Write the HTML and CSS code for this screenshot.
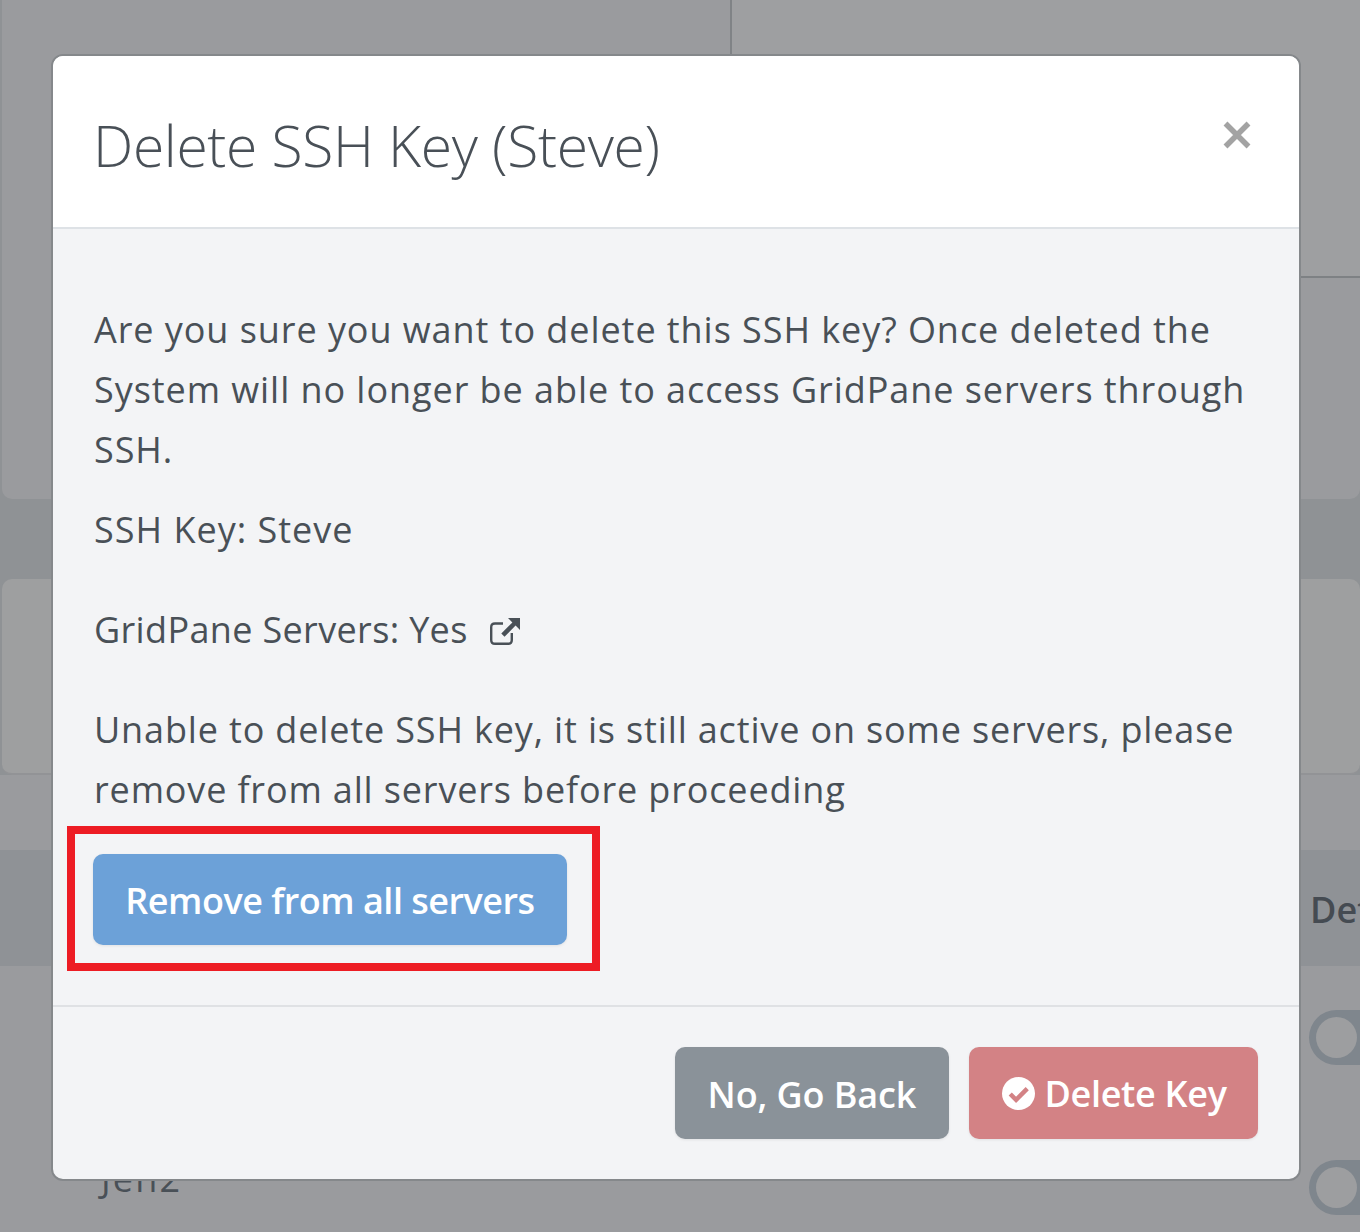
FILE: index.html
```html
<!DOCTYPE html>
<html lang="en">
<head>
  <meta charset="UTF-8">
  <meta name="viewport" content="width=device-width, initial-scale=1.0">
  <title>Delete SSH Key</title>
  <link rel="stylesheet" href="styles.css">
</head>
<body>
  <!-- page behind the dialog, dimmed -->
  <div class="page">
    <div class="card-top">
      <div class="top-left"></div>
      <div class="top-right"></div>
    </div>
    <div class="card-mid"></div>
    <div class="table-head"><span>Default</span></div>
    <div class="table-row"><span class="toggle"></span></div>
    <div class="table-row"><span class="row-name">Jen2</span><span class="toggle"></span></div>
  </div>

  <div class="modal">
    <div class="modal-header">
      <h2>Delete SSH Key (Steve)</h2>
      <button class="close" aria-label="Close">
        <svg viewBox="0 0 28 28" width="28" height="28"><path d="M2.5 2.5 L25.5 25.5 M25.5 2.5 L2.5 25.5" stroke="#a3a3a3" stroke-width="5.5" fill="none"/></svg>
      </button>
    </div>

    <div class="modal-body">
      <p class="intro">Are you sure you want to delete this SSH key? Once deleted the System will no longer be able to access GridPane servers through SSH.</p>
      <p class="detail">SSH Key: Steve</p>
      <p class="detail servers">GridPane Servers: Yes
        <svg class="ext" viewBox="0 0 30 27" width="30" height="27"><path d="M13 5.5 H5 Q1.2 5.5 1.2 9.3 V22 Q1.2 25.8 5 25.8 H18 Q21.8 25.8 21.8 22 V15" stroke="#495057" stroke-width="2.4" fill="none"/><path d="M18 0 H30 V12 L25.6 7.6 L14.5 18.7 L11.3 15.5 L22.4 4.4 Z" fill="#495057"/></svg>
      </p>
      <p class="warning">Unable to delete SSH key, it is still active on some servers, please remove from all servers before proceeding</p>
      <button class="btn btn-blue">Remove from all servers</button>
      <div class="highlight"></div>
    </div>

    <div class="modal-footer">
      <button class="btn btn-grey">No, Go Back</button>
      <button class="btn btn-red">
        <svg viewBox="0 0 34 34" width="33" height="33"><circle cx="17" cy="17" r="17" fill="#fff"/><path d="M8.5 17.5 L14.5 23.5 L26 12" stroke="#d38285" stroke-width="4.6" fill="none"/></svg>
        Delete Key
      </button>
    </div>
  </div>
</body>
</html>
```

FILE: styles.css
```css
html, body {
  margin: 0;
  height: 100%;
}

body {
  font-family: "Open Sans", "Noto Sans", sans-serif;
  background-color: #8f9295;
  width: 1360px;
  height: 1232px;
  overflow: hidden;
  position: relative;
  color: #495057;
}

.page {
  display: flex;
  flex-direction: column;
}

.card-top {
  display: grid;
  grid-template-columns: 730px 1fr;
  grid-template-rows: 278px 1fr;
  height: 499px;
  margin-left: 2px;
  background-color: #9a9b9e;
  border-radius: 0 0 10px 10px;
}

.top-left {
  grid-row: span 2;
  border-right: 2px solid #808386;
  height: 55px;
}

.top-right {
  border-bottom: 2px solid #7e8184;
  background-color: #9e9fa1;
}

.card-mid {
  height: 196px;
  margin: 80px 0 0 2px;
  background-color: #9e9fa0;
  border-radius: 10px;
  border-bottom: 2px solid #929396;
  box-sizing: border-box;
}

.table-head {
  height: 116px;
  margin-top: 75px;
  background-color: #8f9296;
  box-shadow: 0 -75px 0 #9a9b9e;
  display: flex;
  align-items: center;
  box-sizing: border-box;
  padding: 2px 0 0 1310px;
  overflow: hidden;
  font-size: 36px;
  font-weight: 600;
  white-space: nowrap;
  color: #454b52;
}

.table-row {
  height: 150px;
  position: relative;
  background-color: #9a9b9e;
}

.table-row + .table-row {
  height: 116px;
}

.row-name {
  position: absolute;
  left: 101px;
  top: 38px;
  font-size: 36px;
  letter-spacing: 2.2px;
}

.toggle {
  position: absolute;
  left: 1309px;
  top: 44px;
  width: 51px;
  height: 55px;
  border-radius: 28px 0 0 28px;
  background-color: #7f868d;
}

.toggle::before {
  content: "";
  position: absolute;
  left: 7px;
  top: 7px;
  width: 41px;
  height: 41px;
  border-radius: 50%;
  background-color: #9d9ea0;
}

.modal {
  position: absolute;
  left: 51px;
  top: 54px;
  width: 1250px;
  height: 1127px;
  box-sizing: border-box;
  border: 2px solid #85888b;
  border-radius: 12px;
  background-color: #f3f4f6;
  overflow: hidden;
  display: flex;
  flex-direction: column;
}

.modal-header {
  height: 173px;
  box-sizing: border-box;
  background-color: #fff;
  border-bottom: 2px solid #dee2e6;
  padding: 0 41px;
  display: flex;
  justify-content: space-between;
}

.modal-header h2 {
  margin: 49px 0 0 -1px;
  font-size: 57px;
  font-weight: 300;
  letter-spacing: -0.35px;
  line-height: 80px;
  white-space: nowrap;
}

.close {
  border: none;
  background: none;
  padding: 0;
  margin: 65px 7px 0 0;
  width: 28px;
  height: 28px;
}

.close svg {
  display: block;
}

.modal-body {
  position: relative;
  height: 776px;
  box-sizing: border-box;
  padding: 71px 41px 0;
  font-size: 36px;
  letter-spacing: 1px;
  line-height: 60px;
}

.modal-body p {
  margin: 0;
}

.intro {
  padding-bottom: 20px;
  letter-spacing: 0.94px;
}

.detail {
  padding-bottom: 40px;
}

.servers {
  letter-spacing: 0.35px;
}

.servers .ext {
  vertical-align: -2px;
  margin-left: 13px;
}

.warning {
  padding-bottom: 34px;
  letter-spacing: 0.85px;
}

.btn {
  border: none;
  border-radius: 10px;
  color: #fff;
  font-family: inherit;
  font-size: 36px;
  font-weight: 600;
  letter-spacing: -0.3px;
  box-shadow: 0 1px 3px rgba(0, 0, 0, 0.08);
  white-space: nowrap;
}

.btn-blue {
  display: block;
  width: 474px;
  height: 91px;
  margin-left: -1px;
  padding: 2px 0 0;
  letter-spacing: -0.5px;
  background-color: #6ca1d8;
}

.highlight {
  position: absolute;
  left: 14px;
  top: 597px;
  width: 533px;
  height: 145px;
  box-sizing: border-box;
  border: 8px solid #ed1c24;
}

.modal-footer {
  flex: 1;
  border-top: 2px solid #dfe1e4;
  display: flex;
  justify-content: flex-end;
  gap: 20px;
  padding: 40px 41px 0 0;
}

.btn-grey {
  width: 274px;
  height: 92px;
  padding: 2px 0 0;
  letter-spacing: -0.1px;
  background-color: #8a9299;
}

.btn-red {
  width: 289px;
  height: 92px;
  padding: 0 0 0 2px;
  background-color: #d38285;
  display: flex;
  align-items: center;
  justify-content: center;
  gap: 9px;
}
```
